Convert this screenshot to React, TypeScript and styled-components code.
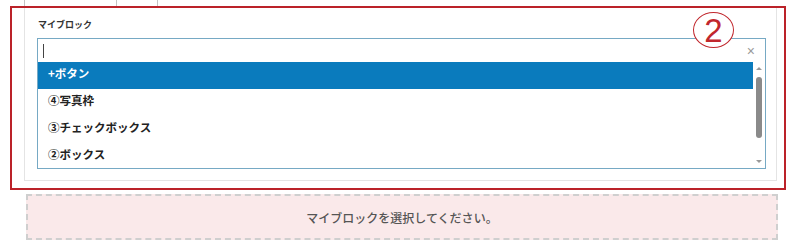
import React from "react";
import styled, { createGlobalStyle } from "styled-components";

const Global = createGlobalStyle`
  html, body { margin: 0; padding: 0; background: #fff; }
  body { font-family: "Noto Sans CJK JP", "Noto Sans", sans-serif; color: #222; }
`;

const Page = styled.div`
  width: 800px;
  height: 248px;
  overflow: hidden;
  background: #fff;
`;

const Tabs = styled.div`
  display: flex;
  height: 6px;
  margin-left: 24px;
`;

const Tab = styled.div<{ $w: number; $first?: boolean }>`
  width: ${(p) => p.$w}px;
  border-right: 1px solid #c4c4c4;
  border-left: ${(p) => (p.$first ? "1px solid #c4c4c4" : "0")};
`;

const Frame = styled.div`
  position: relative;
  box-sizing: border-box;
  margin-left: 10px;
  width: 776px;
  height: 184px;
  border: 2px solid #bb2229;
  padding: 0 7px 7px 12px;
  display: flex;
`;

const Panel = styled.div`
  flex: 1;
  box-sizing: border-box;
  border: 1px solid #e4e4e4;
  border-top: 0;
  padding: 9px 10px 11px 12px;
  display: flex;
  flex-direction: column;
`;

const Label = styled.div`
  font-size: 9px;
  line-height: 15px;
  font-weight: 700;
  color: #333;
  padding-left: 1px;
  margin-bottom: 6px;
`;

const Select = styled.div`
  box-sizing: border-box;
  height: 131px;
  border: 1px solid #76a9c4;
  display: flex;
  flex-direction: column;
  background: #fff;
`;

const Search = styled.div`
  height: 23px;
  display: flex;
  align-items: center;
  padding: 0 10px 0 5px;
`;

const Caret = styled.span`
  width: 1px;
  height: 14px;
  background: #444;
`;

const Clear = styled.span`
  margin-left: auto;
  font-family: "Liberation Sans", Arial, sans-serif;
  font-size: 14px;
  line-height: 14px;
  color: #9a9a9a;
  margin-top: 1px;
`;

const ListArea = styled.div`
  height: 106px;
  display: flex;
  overflow: hidden;
`;

const Options = styled.div`
  flex: 1;
  display: flex;
  flex-direction: column;
`;

const Option = styled.div<{ $active?: boolean }>`
  flex: none;
  box-sizing: border-box;
  height: 27px;
  display: flex;
  align-items: center;
  padding: 0 0 6px 10px;
  font-size: 11.5px;
  font-weight: 700;
  background: ${(p) => (p.$active ? "#0a7bbd" : "transparent")};
  color: ${(p) => (p.$active ? "#fff" : "#222")};
`;

const Scrollbar = styled.div`
  width: 12px;
  display: flex;
  flex-direction: column;
  align-items: center;
  padding: 5px 0 5px;
  box-sizing: border-box;
`;

const Arrow = styled.div<{ $down?: boolean }>`
  width: 0;
  height: 0;
  border-left: 3px solid transparent;
  border-right: 3px solid transparent;
  ${(p) =>
    p.$down
      ? "border-top: 3px solid #999; margin-top: auto;"
      : "border-bottom: 3px solid #999;"}
`;

const Thumb = styled.div`
  width: 6px;
  height: 61px;
  margin-top: 7px;
  border-radius: 3px;
  background: #8a8a8a;
`;

const Marker = styled.div`
  position: absolute;
  left: 681px;
  top: 4px;
  width: 41px;
  height: 36px;
  box-sizing: border-box;
  border: 1.5px solid #c1272d;
  border-radius: 50%;
  background: #fff;
  display: flex;
  align-items: center;
  justify-content: center;
  font-family: "Liberation Sans", Arial, sans-serif;
  font-size: 33px;
  line-height: 33px;
  color: #c1272d;
  padding-top: 1px;
`;

const Placeholder = styled.div`
  box-sizing: border-box;
  margin: 4px 0 0 26px;
  width: 752px;
  height: 46px;
  background: #fae9ea;
  border: 2px dashed #cfcfcf;
  display: flex;
  align-items: center;
  justify-content: center;
  font-size: 12px;
  font-weight: 500;
  color: #555;
`;

const options = ["+ボタン", "④写真枠", "③チェックボックス", "②ボックス"];

export default function App() {
  return (
    <Page>
      <Global />
      <Tabs>
        <Tab $w={91} $first />
        <Tab $w={40} />
      </Tabs>
      <Frame>
        <Panel>
          <Label>マイブロック</Label>
          <Select>
            <Search>
              <Caret />
              <Clear>×</Clear>
            </Search>
            <ListArea>
              <Options>
                {options.map((o, i) => (
                  <Option key={o} $active={i === 0}>
                    {o}
                  </Option>
                ))}
              </Options>
              <Scrollbar>
                <Arrow />
                <Thumb />
                <Arrow $down />
              </Scrollbar>
            </ListArea>
          </Select>
        </Panel>
        <Marker>2</Marker>
      </Frame>
      <Placeholder>マイブロックを選択してください。</Placeholder>
    </Page>
  );
}
